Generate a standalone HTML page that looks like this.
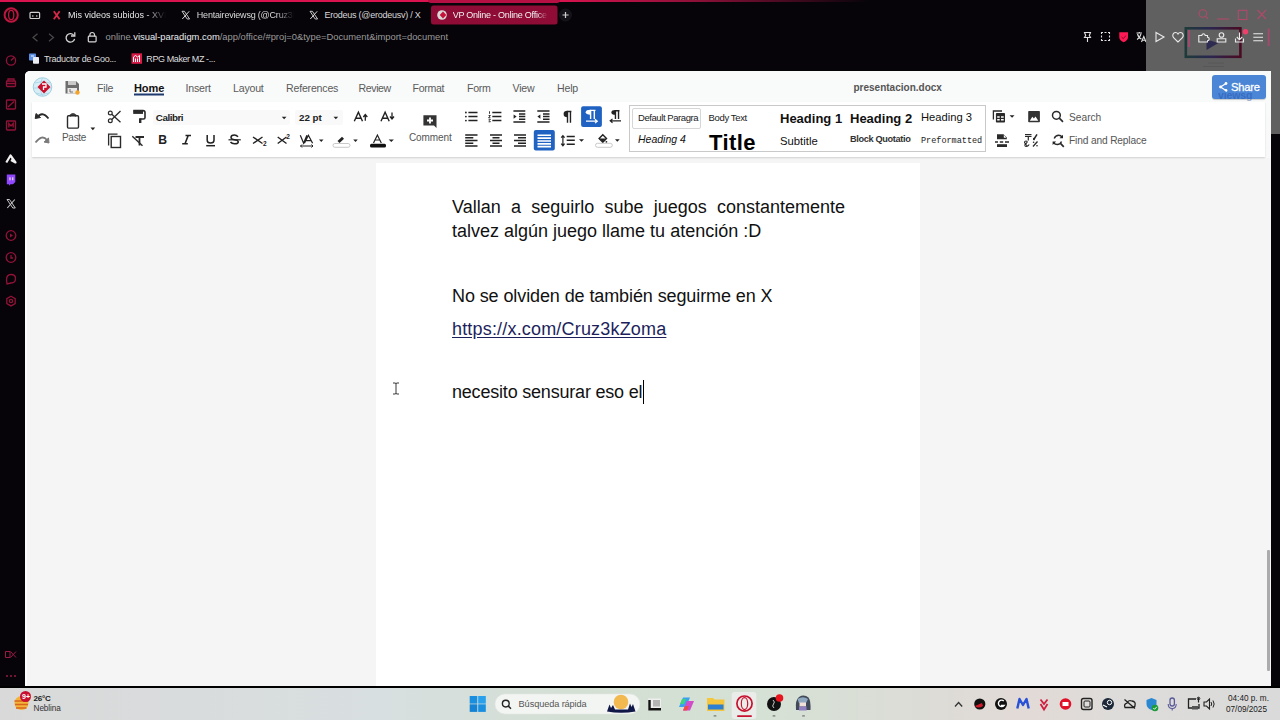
<!DOCTYPE html>
<html><head><meta charset="utf-8">
<style>
*{margin:0;padding:0;box-sizing:border-box}
html,body{width:1280px;height:720px;overflow:hidden;background:#060409;font-family:"Liberation Sans",sans-serif}
.a{position:absolute}
.t{position:absolute;white-space:nowrap;line-height:1}
svg{position:absolute;overflow:visible}
</style></head><body>
<!-- top accent line -->
<div class="a" style="left:0;top:0;width:1280px;height:1.5px;background:linear-gradient(90deg,#d8134f 0,#d8134f 560px,#8a1038 700px,#060409 870px)"></div>
<div class="a" style="left:428px;top:0;width:132px;height:3px;background:#b50f43;border-radius:0 0 3px 3px"></div>

<!-- ===== browser chrome ===== -->
<svg width="1280" height="720" style="left:0;top:0" viewBox="0 0 1280 720" fill="none">
  <!-- opera logo -->
  <ellipse cx="11.2" cy="15" rx="6.6" ry="6.8" stroke="#c0163f" stroke-width="2"/>
  <ellipse cx="11.2" cy="15" rx="2.6" ry="4.6" stroke="#c0163f" stroke-width="1.3"/>
  <!-- vr icon -->
  <rect x="30" y="12.3" width="9.6" height="6.2" rx="1" stroke="#cfcfcf" stroke-width="1.2"/>
  <circle cx="32.8" cy="16" r="0.8" fill="#cfcfcf"/><circle cx="36.8" cy="16" r="0.8" fill="#cfcfcf"/>
  <!-- red X tab1 -->
  <path d="M53.8 11.3 L59.6 19.3 M59.6 11.3 L53.8 19.3" stroke="#d6294a" stroke-width="1.8"/>
  <!-- X tab2 / tab3 -->
  <path d="M182 11.3 H184.4 L189.6 19 H187.2 Z" stroke="#d8d8d8" stroke-width="0.9"/>
  <path d="M189.2 11.3 L182.3 19" stroke="#d8d8d8" stroke-width="1"/>
  <path d="M310 11.3 H312.4 L317.6 19 H315.2 Z" stroke="#d8d8d8" stroke-width="0.9"/>
  <path d="M317.2 11.3 L310.3 19" stroke="#d8d8d8" stroke-width="1"/>
  <!-- active tab -->
  <rect x="431" y="5.6" width="126.5" height="19" rx="2.5" fill="#8e0c36"/>
  <circle cx="442" cy="15" r="4.8" fill="#d9d9d9"/>
  <path d="M443 11.5 L446.3 15 L443 18.5 L439.7 15 Z" fill="#c8143a"/>
  <!-- plus -->
  <circle cx="565.5" cy="15" r="6.5" fill="#15131a"/>
  <path d="M562.5 15 H568.6 M565.5 12 V18" stroke="#cfcfcf" stroke-width="1.2"/>
  <!-- nav -->
  <path d="M37.5 33.8 L33 37.5 L37.5 41.2" stroke="#4a4a4a" stroke-width="1.2"/>
  <path d="M49 33.8 L53.5 37.5 L49 41.2" stroke="#4a4a4a" stroke-width="1.2"/>
  <path d="M74 35.5 A4.3 4.3 0 1 0 74.6 38.8" stroke="#d6d6d6" stroke-width="1.3"/>
  <path d="M74.8 32.2 V36 H71" stroke="#d6d6d6" stroke-width="1.3"/>
  <rect x="88.3" y="36.2" width="7.8" height="5.6" rx="0.8" stroke="#d6d6d6" stroke-width="1.2"/>
  <path d="M89.9 36.2 V34.8 A2.3 2.3 0 0 1 94.5 34.8 V36.2" stroke="#d6d6d6" stroke-width="1.2"/>
  <!-- bookmarks -->
  <rect x="29" y="53.5" width="7" height="7" rx="0.8" fill="#5b8fe6"/>
  <rect x="33" y="57" width="6" height="6.8" rx="0.8" fill="#e9ecf3"/>
  <path d="M31 56 H34" stroke="#fff" stroke-width="0.9"/>
  <rect x="131.5" y="53.3" width="10.5" height="10.5" fill="#d81b47"/>
  <path d="M133.5 62 V57 L135.5 55.5 L137.5 57 L139.5 55.5 V62 M135.5 58.5 V62 M137.5 58.5 V62" stroke="#fff" stroke-width="1"/>
  <!-- sidebar icons -->
  <g stroke="#921238" stroke-width="1.3">
    <circle cx="11" cy="60.5" r="4.6"/>
    <path d="M11 60.5 L14 57.5"/>
    <rect x="6.5" y="81" width="9" height="5.5" rx="0.8"/><path d="M8 81 V79 H14 V81 M6.5 83.5 H15.5"/>
    <rect x="6.5" y="100" width="9" height="9" rx="0.8"/><path d="M8 107 L14 101.5"/>
    <rect x="6.5" y="121" width="9" height="9" rx="0.8"/><path d="M8.8 127.5 V123.5 L11 126 L13.2 123.5 V127.5"/>
    <circle cx="11" cy="235.5" r="4.8"/>
    <circle cx="11" cy="257.5" r="4.8"/><path d="M11 255 V258 H13"/>
    <path d="M6.5 280 Q6.5 274.5 11 274.5 Q15.5 274.5 15.5 278.5 Q15.5 283 11 283 L7 284 Z"/>
    <path d="M11 296.3 L15.2 298.7 V303.5 L11 305.9 L6.8 303.5 V298.7 Z"/><circle cx="11" cy="301" r="1.6"/>
  </g>
  <path d="M10 233.5 L13 235.5 L10 237.5 Z" fill="#921238"/>
  <path d="M6.3 162.5 L10.5 155.5 L15.5 162.5 L11 160" stroke="#f0f0f0" stroke-width="2.2" stroke-linejoin="round"/>
  <path d="M6.8 174.5 H15.3 V182 L13 184.3 H10.5 L9 185.8 V184.3 H6.8 Z" fill="#9146ff"/>
  <path d="M10 177.3 V180.3 M12.8 177.3 V180.3" stroke="#fff" stroke-width="1"/>
  <path d="M7 199.5 H9.5 L15.3 208 H12.8 Z" stroke="#c8c8c8" stroke-width="1"/>
  <path d="M14.8 199.5 L7.3 208" stroke="#c8c8c8" stroke-width="1.1"/>
  <path d="M5.5 651.5 H10 V657.5 H5.5 Z M10.5 651.5 L16 657.5 M16 651.5 L10.5 657.5" stroke="#9a1a45" stroke-width="1"/>
  <g fill="#9a1a45"><circle cx="7" cy="676" r="1"/><circle cx="11" cy="676" r="1"/><circle cx="15" cy="676" r="1"/></g>
  <!-- right toolbar icons -->
  <g stroke="#e0e0e0" stroke-width="1.1">
    <path d="M1084.5 32.5 H1090.5 L1089.3 35.5 L1090.5 37.5 H1084.5 L1085.7 35.5 Z M1087.5 37.5 V42"/>
    <path d="M1101.5 34 V32.5 H1103 M1108 32.5 H1109.5 V34 M1109.5 39 V40.5 H1108 M1103 40.5 H1101.5 V39 M1101.5 35.5 V37.5 M1109.5 35.5 V37.5 M1104.5 32.5 H1106.5 M1104.5 40.5 H1106.5"/>
    <path d="M1136.5 33 H1142 M1139.3 32 V33.5 M1137.5 34 Q1138.5 38 1141.5 39 M1141 34 Q1140 38 1137 39.5 M1141.5 42 L1143.8 36.5 L1146 42 M1142.4 40.3 H1145.2"/>
  </g>
  <path d="M1119.3 32.3 H1128 V37 Q1128 40.5 1123.65 42.2 Q1119.3 40.5 1119.3 37 Z" fill="#ff1a55"/>
  <path d="M1121.5 37 L1123.3 38.6 L1126 35.5" stroke="#8a0a2a" stroke-width="1"/>
</svg>
<div class="t" style="left:68px;top:11px;font-size:9px;color:#e6e6e6;width:98px;overflow:hidden;-webkit-mask-image:linear-gradient(90deg,#000 80%,transparent)">Mis videos subidos - XVII</div>
<div class="t" style="left:196.8px;top:11px;font-size:9px;color:#d8d8d8;letter-spacing:-0.2px;width:97px;overflow:hidden;-webkit-mask-image:linear-gradient(90deg,#000 82%,transparent)">Hentaireviewsg (@Cruz3kZoma)</div>
<div class="t" style="left:324.6px;top:11px;font-size:9px;color:#d8d8d8;letter-spacing:-0.25px">Erodeus (@erodeusv) / X</div>
<div class="t" style="left:452.7px;top:11px;font-size:9px;color:#f2f2f2;letter-spacing:-0.25px;width:95px;overflow:hidden;-webkit-mask-image:linear-gradient(90deg,#000 88%,transparent)">VP Online - Online Office</div>
<div class="t" style="left:105.6px;top:32px;font-size:9.4px;color:#9a9a9a"><span>online.</span><span style="color:#ececec">visual-paradigm.com</span><span>/app/office/#proj=0&amp;type=Document&amp;import=document</span></div>
<div class="t" style="left:44px;top:54.8px;font-size:9px;color:#dedede;letter-spacing:-0.3px">Traductor de Goo...</div>
<div class="t" style="left:146.3px;top:54.8px;font-size:9px;color:#dedede;letter-spacing:-0.4px">RPG Maker MZ -...</div>

<!-- gray overlay (recording widget) -->
<div class="a" style="left:1146px;top:0;width:134px;height:134px;background:#606060"></div>
<svg width="1280" height="720" style="left:0;top:0" viewBox="0 0 1280 720" fill="none">
  <g stroke="#b04a68" stroke-width="1.1">
    <circle cx="1202.8" cy="13.5" r="3.8"/><path d="M1205.5 16.2 L1208 18.8"/>
    <path d="M1217 19 H1229"/>
    <rect x="1238.3" y="10.3" width="8.6" height="9.2"/>
    <path d="M1257.5 10 L1266 19 M1266 10 L1257.5 19"/>
  </g>
  <rect x="1185.8" y="28.3" width="54.6" height="28.5" stroke="url(#fg)" stroke-width="2.6"/>
  <defs><linearGradient id="fg" x1="0" x2="1" y1="0" y2="0"><stop offset="0" stop-color="#1e3b3a"/><stop offset="0.45" stop-color="#2a2650"/><stop offset="1" stop-color="#4a0b22"/></linearGradient></defs>
  <path d="M1189 30 V47" stroke="#a24a6c" stroke-width="2"/>
  <path d="M1268.7 28.5 V46" stroke="#a24a6c" stroke-width="2"/>
  <path d="M1206.5 39.5 L1218.5 43 L1206.5 50 Z" fill="#2e2b50"/>
  <g stroke="#eaeaea" stroke-width="1.1">
    <path d="M1156 32.5 L1164 37 L1156 41.5 Z"/>
    <path d="M1178 42 L1173.8 37.8 Q1172.5 36.5 1172.8 35 Q1173.3 32.5 1175.6 32.5 Q1177.2 32.5 1178 34 Q1178.8 32.5 1180.4 32.5 Q1182.7 32.5 1183.2 35 Q1183.5 36.5 1182.2 37.8 Z"/>
    <path d="M1198.8 42 V35.5 H1201.8 A1.7 1.7 0 1 1 1205.2 35.5 H1207.5 V37.3 A1.7 1.7 0 1 1 1207.5 40.7 V42 Z"/>
    <circle cx="1221.5" cy="35" r="2.3"/><path d="M1217.2 42 V38.8 H1225.8 V42 Z"/>
    <path d="M1239.5 32.5 V39.5 M1236.8 37 L1239.5 39.8 L1242.2 37 M1235.5 38.5 V42 H1243.5 V38.5"/>
    <path d="M1253.3 33.7 H1263 M1253.3 37.3 H1263 M1253.3 40.7 H1263"/>
  </g>
  <circle cx="1245.5" cy="31.8" r="2.7" fill="#f0406a"/>
  <path d="M1208 63 H1224 M1203 66.5 H1224" stroke="#555" stroke-width="0.8"/>
</svg>

<!-- webpage -->
<div class="a" id="page" style="left:25px;top:71px;width:1246px;height:615px;background:#f5f5f5;border-radius:5px 0 0 0;overflow:hidden">
  <!-- menu bar -->
  <div class="a" style="left:0;top:0;width:1246px;height:31px;background:#f9fafa"></div>
  <!-- toolbar panel -->
  <div class="a" style="left:0;top:31px;width:1246px;height:56px;background:linear-gradient(180deg,#f9fafa,#f8f8f8)"></div>
  <div class="a" style="left:0;top:0;width:2px;height:615px;background:#fdfdfd"></div>
  <div class="a" style="left:7px;top:31px;width:1233px;height:55px;background:#fff;box-shadow:0 1px 1.5px rgba(0,0,0,.16)"></div>
  <!-- doc page -->
  <div class="a" style="left:351px;top:92px;width:544px;height:530px;background:#fff"></div>
  <!-- doc text -->
  <div class="t" style="left:427px;top:127px;width:393px;font-size:18px;color:#111;text-align:justify;text-align-last:justify">Vallan a seguirlo sube juegos constantemente</div>
  <div class="t" style="left:427px;top:151px;font-size:18px;color:#111">talvez algún juego llame tu atención :D</div>
  <div class="t" style="left:427px;top:216px;font-size:18px;color:#111;letter-spacing:-0.1px">No se olviden de también seguirme en X</div>
  <div class="t" style="left:427px;top:248.5px;font-size:18px;color:#1d1f5c;letter-spacing:0.18px;text-decoration:underline;text-underline-offset:2px">https://x.com/Cruz3kZoma</div>
  <div class="t" style="left:427px;top:311.5px;font-size:18px;color:#111;letter-spacing:-0.2px">necesito sensurar eso el</div>
  <div class="a" style="left:617.5px;top:309px;width:1.2px;height:24px;background:#000"></div>
</div>

<!-- ===== menu bar ===== -->
<svg width="1280" height="720" style="left:0;top:0" viewBox="0 0 1280 720">
  <!-- logo -->
  <circle cx="42.5" cy="87" r="9.3" fill="#d8eef6" stroke="#8fc6dc" stroke-width="0.8"/>
  <path d="M35 83 Q42 80 50 83 M34 88 H51 M36 93 Q42 96 49 93 M42.5 78 Q38 87 42.5 96" stroke="#9ccfe2" stroke-width="0.7" fill="none"/>
  <path d="M44 80.5 L50.5 87 L44 93.5 L37.5 87 Z" fill="#c8102e"/>
  <path d="M42 84 H46 V87 H43.5 V90" stroke="#fff" stroke-width="1.3" fill="none"/>
  <!-- save -->
  <path d="M65.5 81 H76 L79 84 V93.5 H65.5 Z" fill="#6d6d6d"/>
  <rect x="68" y="81" width="8" height="4" fill="#c9c9c9"/>
  <rect x="67.5" y="88" width="9.5" height="5.5" fill="#e8e8e8"/>
  <path d="M70 89 V92 H73" stroke="#555" stroke-width="0.8" fill="none"/>
  <circle cx="77.5" cy="92.5" r="2.2" fill="#f4a42b"/>
  <!-- Home underline -->
  <rect x="134" y="93.5" width="30" height="2" fill="#1f3a6e"/>
</svg>
<div class="t" style="left:97px;top:83px;font-size:10.6px;color:#5a5a5a;letter-spacing:-0.2px">File</div>
<div class="t" style="left:134px;top:83px;font-size:11px;font-weight:bold;color:#111;letter-spacing:-0.1px">Home</div>
<div class="t" style="left:185.5px;top:83px;font-size:10.6px;color:#5a5a5a;letter-spacing:-0.2px">Insert</div>
<div class="t" style="left:233px;top:83px;font-size:10.6px;color:#5a5a5a;letter-spacing:-0.2px">Layout</div>
<div class="t" style="left:286px;top:83px;font-size:10.6px;color:#5a5a5a;letter-spacing:-0.2px">References</div>
<div class="t" style="left:358.5px;top:83px;font-size:10.6px;color:#5a5a5a;letter-spacing:-0.4px">Review</div>
<div class="t" style="left:412.5px;top:83px;font-size:10.6px;color:#5a5a5a;letter-spacing:-0.3px">Format</div>
<div class="t" style="left:467px;top:83px;font-size:10.6px;color:#5a5a5a;letter-spacing:-0.3px">Form</div>
<div class="t" style="left:512.5px;top:83px;font-size:10.6px;color:#5a5a5a;letter-spacing:-0.2px">View</div>
<div class="t" style="left:557px;top:83px;font-size:10.6px;color:#5a5a5a;letter-spacing:-0.2px">Help</div>
<div class="t" style="left:853.5px;top:82.5px;font-size:10px;font-weight:bold;color:#555">presentacion.docx</div>
<!-- share -->
<div class="a" style="left:1212px;top:75px;width:54px;height:24px;background:#4a85d6;border-radius:3px;box-shadow:0 1px 1px rgba(0,0,0,.2)"></div>
<svg width="1280" height="720" style="left:0;top:0" viewBox="0 0 1280 720">
  <path d="M1226 83.5 L1220.5 87 L1226 90.5" stroke="#fff" stroke-width="1.3" fill="none"/>
  <circle cx="1226" cy="83.5" r="1.4" fill="#fff"/><circle cx="1220.5" cy="87" r="1.4" fill="#fff"/><circle cx="1226" cy="90.5" r="1.4" fill="#fff"/>
</svg>
<div class="t" style="left:1231px;top:81.5px;font-size:11.2px;color:#fff;letter-spacing:-0.2px;-webkit-text-stroke:0.3px #fff">Share</div>

<div class="t" style="left:1218px;top:90px;font-size:10.5px;font-weight:bold;color:rgba(30,70,160,.4);letter-spacing:-0.1px">viewsg</div>
<div class="t" style="left:1170px;top:90px;font-size:10.5px;font-weight:bold;color:rgba(0,0,0,.025);letter-spacing:-0.1px">Hentaire</div>
<!-- ===== toolbar ===== -->
<div class="a" style="left:153px;top:110px;width:137px;height:15px;background:#f9f9f9;border-radius:2px"></div>
<div class="a" style="left:295px;top:110px;width:48px;height:15px;background:#f9f9f9;border-radius:2px"></div>
<div class="t" style="left:155.8px;top:113px;font-size:9.8px;font-weight:bold;color:#222;letter-spacing:-0.45px">Calibri</div>
<div class="t" style="left:299px;top:113px;font-size:9.8px;font-weight:bold;color:#222">22 pt</div>
<div class="t" style="left:62px;top:132.5px;font-size:10px;color:#555;letter-spacing:-0.3px">Paste</div>
<div class="t" style="left:409px;top:132.5px;font-size:10px;color:#555;letter-spacing:-0.1px">Comment</div>
<div class="t" style="left:1069px;top:112.8px;font-size:10.2px;color:#555">Search</div>
<div class="t" style="left:1069px;top:136.3px;font-size:10.2px;color:#555;letter-spacing:-0.15px">Find and Replace</div>
<svg width="1280" height="720" style="left:0;top:0" viewBox="0 0 1280 720" fill="none" stroke="#2a2a2a">
  <!-- undo / redo -->
  <path d="M37 117.5 Q42 110.5 48.5 118.5" stroke-width="1.8"/>
  <path d="M35.2 118.5 L36 113.5 L40.5 117.5 Z" fill="#2a2a2a" stroke-width="1"/>
  <path d="M47 140 Q42 134 35.5 142.5" stroke="#7a7a7a" stroke-width="1.8"/>
  <path d="M49 143 L48.5 138 L44 142 Z" fill="#7a7a7a" stroke="#7a7a7a" stroke-width="1"/>
  <!-- clipboard -->
  <rect x="67.5" y="115.8" width="11" height="12.3" rx="1" stroke-width="1.4"/>
  <path d="M70.5 116.5 V115 H72 V114 H74 V115 H75.5 V116.5" stroke-width="1.3"/>
  <path d="M90.5 127.5 H95.2 L92.85 130.2 Z" fill="#222" stroke="none"/>
  <!-- scissors -->
  <circle cx="110.3" cy="113" r="1.9" stroke-width="1.2"/>
  <circle cx="110.3" cy="120.8" r="1.9" stroke-width="1.2"/>
  <path d="M111.8 114.3 L120.5 122.3 M111.8 119.5 L120.5 111" stroke-width="1.3"/>
  <!-- copy -->
  <path d="M108.6 145.5 V134.2 H117.5" stroke-width="1.3"/>
  <rect x="111.2" y="136.5" width="9.3" height="11" stroke-width="1.4"/>
  <!-- format painter -->
  <path d="M133.3 110.6 H143 Q145 110.6 145 112.5 V117.5 Q145 119 143.5 119 H140.2 V122.8" stroke-width="1.6"/>
  <rect x="133.2" y="110.5" width="9.8" height="3.4" fill="#2a2a2a" stroke="none"/>
  <rect x="139" y="118.5" width="2.4" height="4.5" fill="#2a2a2a" stroke="none"/>
  <!-- clear formatting -->
  <path d="M135.5 137 H144" stroke-width="2"/>
  <path d="M139.5 137 V145.5" stroke-width="1.8"/>
  <path d="M132.3 136.3 L142.5 145.8" stroke-width="1.4"/>
  <!-- dropdown arrows font -->
  <path d="M281.8 116.8 H286.5 L284.15 119.3 Z" fill="#222" stroke="none"/>
  <path d="M333.5 116.8 H338.2 L335.85 119.3 Z" fill="#222" stroke="none"/>
</svg>
<!-- B I U S x2 x2 -->
<div class="t" style="left:158.3px;top:133.5px;font-size:12.2px;font-weight:bold;color:#222">B</div>
<svg width="1280" height="720" style="left:0;top:0" viewBox="0 0 1280 720" fill="none" stroke="#222">
  <path d="M185.5 135.5 H191 M182.2 143.8 H187.8 M188.2 135.5 L185 143.8" stroke-width="1.6"/>
  <path d="M207.2 135 V140.2 Q207.2 143 210.6 143 Q214 143 214 140.2 V135" stroke-width="1.5"/>
  <path d="M206.2 145.7 H215" stroke-width="1.5"/>
  <path d="M228.5 139.8 H240.8" stroke-width="1.2"/>
  <path d="M253 137 L262.5 143.5 M262.5 137 L253 143.5" stroke-width="1.4"/>
  <path d="M277.7 137 L286.5 143.5 M286.5 137 L277.7 143.5" stroke-width="1.4"/>
  <!-- VA -->
  <path d="M300.3 135.3 L303.6 143.2 L306.9 135.3 M304.4 143.2 L308.4 135.3 L312.6 143.2 M306 140.5 H311" stroke-width="1.25"/>
  <path d="M300.5 146 H313 M302 144.5 L300.5 146 L302 147.5 M311.5 144.5 L313 146 L311.5 147.5" stroke-width="1"/>
  <path d="M319 139.5 H323.5 L321.25 142 Z" fill="#222" stroke="none"/>
  <!-- highlighter -->
  <path d="M337.5 141 L342 136.8 L344 138.8 L339.5 143 Z" fill="#222" stroke="none"/>
  <rect x="333" y="143.5" width="17" height="3.8" rx="1.9" stroke="#bbb" stroke-width="0.8" fill="#fff"/>
  <path d="M353.2 139.5 H357.8 L355.5 142 Z" fill="#222" stroke="none"/>
  <!-- font color -->
  <path d="M373.5 143 L377.4 135 L381.3 143 M375 140 H379.8" stroke-width="1.2"/>
  <rect x="370" y="143.8" width="16" height="3.8" rx="1.5" fill="#111" stroke="none"/>
  <path d="M388.7 139.5 H393.9 L391.3 142 Z" fill="#222" stroke="none"/>
  <!-- A up / A down -->
  <path d="M354.3 121.3 L358.4 112.3 L362.5 121.3 M355.8 118.3 H361" stroke-width="1.4"/>
  <path d="M365.3 120.8 V114.8 M363.3 117 L365.3 114.6 L367.3 117" stroke-width="1.3"/>
  <path d="M381 121.3 L385.1 112.3 L389.2 121.3 M382.5 118.3 H387.7" stroke-width="1.4"/>
  <path d="M392 112.5 V118.8 M390 116.5 L392 119 L394 116.5" stroke-width="1.3"/>
  <!-- comment -->
  <path d="M423.4 115.2 H436.5 V128 L434 125.6 H423.4 Z" fill="#333" stroke="none"/>
  <path d="M430 117.5 V123.5 M427 120.5 H433" stroke="#fff" stroke-width="1.8"/>
</svg>
<div class="t" style="left:263px;top:140.5px;font-size:6.5px;font-weight:bold;color:#222">2</div>
<div class="t" style="left:286.3px;top:133.8px;font-size:6.5px;font-weight:bold;color:#222">2</div>
<svg width="1280" height="720" style="left:0;top:0" viewBox="0 0 1280 720" fill="none" stroke="#222">
  <!-- S strike -->
  <path d="M238 136.8 Q236.5 135 234.4 135 Q231 135 231 137.3 Q231 139.4 234.5 139.8 Q238.3 140.3 238.3 142 Q238.3 143.8 234.5 143.8 Q231.8 143.8 230.5 142" stroke-width="1.5"/>
  <!-- bullets -->
  <g stroke-width="1.5">
    <path d="M468.4 112.5 H477.5 M468.4 116.6 H477.5 M468.4 120.6 H477.5"/>
    <path d="M492.3 112.5 H501.4 M492.3 116.6 H501.4 M492.3 120.6 H501.4"/>
    <path d="M513.4 111.1 H525.3 M519 114 H525.3 M519 116.6 H525.3 M519 119.3 H525.3 M513.4 122 H525.3"/>
    <path d="M537.3 111.1 H549.5 M543 114 H549.5 M543 116.6 H549.5 M543 119.3 H549.5 M537.3 122 H549.5"/>
    <path d="M465.2 135 H477.5 M465.2 137.8 H473.3 M465.2 140.5 H477.5 M465.2 143.3 H473.3 M465.2 146 H477.5"/>
    <path d="M490 135 H502 M492.5 137.8 H499.5 M490 140.5 H502 M492.5 143.3 H499.5 M490 146 H502"/>
    <path d="M514 135 H526 M518 137.8 H526 M514 140.5 H526 M518 143.3 H526 M514 146 H526"/>
  </g>
  <g fill="#222" stroke="none">
    <circle cx="465.9" cy="112.5" r="0.9"/><circle cx="465.9" cy="116.6" r="0.9"/><circle cx="465.9" cy="120.6" r="0.9"/>
    <path d="M513.6 114.5 L516.6 116.6 L513.6 118.7 Z"/>
    <path d="M540.4 114.5 L537.4 116.6 L540.4 118.7 Z"/>
  </g>
  <g stroke-width="0.9">
    <path d="M489.5 111.3 V113.8 M488.6 115.5 H490.4 L488.6 117.7 H490.4 M488.6 119.3 H490.4 L489.3 120.5 L490.4 121.8 H488.6"/>
  </g>
  <!-- pilcrow -->
  <path d="M567.50 110.80 H567.50 A3.90 3.21 0 0 0 567.50 117.23 H567.50 Z" fill="#222" stroke="none"/><path d="M567.50 110.80 V122.70 M570.46 110.80 V122.70 M567.50 111.50 H571.40" stroke="#222" stroke-width="1.4"/>
  <!-- LTR btn -->
  <rect x="581.1" y="106.2" width="20.8" height="20.8" rx="2" fill="#1f62c2" stroke="none"/>
  <path d="M590.60 109.70 H590.60 A4.90 2.48 0 0 0 590.60 114.67 H590.60 Z" fill="#fff" stroke="none"/><path d="M590.60 109.70 V118.90 M594.32 109.70 V118.90 M590.60 110.40 H595.50" stroke="#fff" stroke-width="1.4"/>
  <path d="M586 121.2 H597 M595 119.3 L597.3 121.2 L595 123.1" stroke="#fff" stroke-width="1.2"/>
  <!-- RTL -->
  <path d="M615.45 110.00 H615.45 A4.05 2.40 0 0 0 615.45 114.81 H615.45 Z" fill="#222" stroke="none"/><path d="M615.45 110.00 V118.90 M618.53 110.00 V118.90 M615.45 110.70 H619.50" stroke="#222" stroke-width="1.4"/>
  <path d="M621 120.8 H610.5 M612.5 118.9 L610.2 120.8 L612.5 122.7" stroke-width="1.2"/>
  <!-- justify btn -->
  <rect x="533.8" y="130.1" width="21" height="20.4" rx="2" fill="#1f62c2" stroke="none"/>
  <path d="M537.5 135.2 H551 M537.5 138.1 H551 M537.5 141 H551 M537.5 143.9 H551 M537.5 146.6 H551" stroke="#fff" stroke-width="1.6"/>
  <!-- line spacing -->
  <path d="M562.9 136 V145.3 M561.2 137.6 L562.9 135.6 L564.6 137.6 M561.2 143.7 L562.9 145.7 L564.6 143.7" stroke-width="1.2"/>
  <path d="M566.7 136.5 H574.8 M566.7 140.3 H574.8 M566.7 144.3 H574.8" stroke-width="1.4"/>
  <path d="M579 139.3 H584 L581.5 141.8 Z" fill="#222" stroke="none"/>
  <!-- shading -->
  <path d="M602.8 134.8 L606.5 138.5 L602.8 142.2 L599.1 138.5 Z" stroke-width="1.4"/>
  <path d="M599.6 138.5 H606 L602.8 141.7 Z" fill="#222" stroke="none"/>
  <circle cx="606.4" cy="141.8" r="0.9" fill="#222" stroke="none"/>
  <rect x="595.5" y="143.3" width="16.8" height="4" rx="2" stroke="#bbb" stroke-width="0.8" fill="#fff"/>
  <path d="M615 139.3 H619.7 L617.35 141.8 Z" fill="#222" stroke="none"/>
</svg>
<!-- ===== style gallery ===== -->
<div class="a" style="left:629px;top:105px;width:357px;height:46.5px;border:1px solid #c9c9c9;background:#fff"></div>
<div class="a" style="left:632px;top:107.5px;width:69px;height:21px;border:1px solid #d6d6d6;border-radius:2px"></div>
<div class="a" style="left:630px;top:106px;width:355px;height:45px;overflow:hidden">
<div class="t" style="left:8px;top:7px;font-size:9.5px;color:#222;letter-spacing:-0.43px">Default Paragra</div>
<div class="t" style="left:78.6px;top:7px;font-size:9.5px;color:#222;letter-spacing:-0.37px">Body Text</div>
<div class="t" style="left:150px;top:6px;font-size:13px;font-weight:bold;color:#111">Heading 1</div>
<div class="t" style="left:220px;top:6px;font-size:13px;font-weight:bold;color:#111">Heading 2</div>
<div class="t" style="left:291px;top:6.4px;font-size:11.2px;color:#111">Heading 3</div>
<div class="t" style="left:8px;top:28px;font-size:10.5px;font-style:italic;color:#111">Heading 4</div>
<div class="t" style="left:79px;top:25.6px;font-size:22px;font-weight:bold;color:#000;letter-spacing:0.4px">Title</div>
<div class="t" style="left:150px;top:29.5px;font-size:11.3px;color:#111">Subtitle</div>
<div class="a" style="left:220px;top:20px;width:61px;height:25px;overflow:hidden"><div class="t" style="left:0;top:8.75px;font-size:9.2px;font-weight:bold;color:#333;letter-spacing:-0.35px">Block Quotation</div></div>
<div class="a" style="left:291px;top:20px;width:61px;height:25px;overflow:hidden"><div class="t" style="left:0;top:10.6px;font-size:8.5px;font-family:'Liberation Mono',monospace;color:#222">Preformatted</div></div>
</div>
<!-- ===== right tools ===== -->
<svg width="1280" height="720" style="left:0;top:0" viewBox="0 0 1280 720" fill="none" stroke="#2a2a2a">
  <path d="M993.4 119.5 V111 H1002" stroke-width="1.3"/>
  <rect x="995.9" y="113.1" width="9.1" height="9.5" rx="0.8" fill="#2a2a2a" stroke="none"/>
  <path d="M997.2 117 H999.7 M1001 117 H1003.7 M997.2 119.8 H999.7 M1001 119.8 H1003.7" stroke="#fff" stroke-width="1.4"/>
  <path d="M1009.6 115.3 H1014.5 L1012.05 117.8 Z" fill="#222" stroke="none"/>
  <rect x="1028.2" y="111" width="11.7" height="11.3" rx="0.8" fill="#333" stroke="none"/>
  <path d="M1029.8 120.8 L1032.3 116.8 L1033.9 118.6 L1035.5 116.6 L1038.3 120.8 Z" fill="#fff" stroke="none"/>
  <circle cx="1056.4" cy="115.3" r="3.9" stroke-width="1.5"/>
  <path d="M1059.3 118.2 L1063 121.8" stroke-width="1.7"/>
  <!-- page break -->
  <path d="M997 134.2 H1003.5 L1006.8 137.5 V139.2 H997 Z" fill="#2a2a2a" stroke="none"/>
  <path d="M1003.8 134.8 L1006.3 137.8 H1003.8 Z" fill="#fff" stroke="none"/>
  <path d="M995 142 H998 M999.8 142 H1003.2 M1005 142 H1009" stroke-width="1.3"/>
  <rect x="997" y="144.2" width="10" height="2.8" fill="#2a2a2a" stroke="none"/>
  <!-- special chars -->
  <path d="M1025 134.5 H1031.5 M1025 136.4 H1031.5 M1028.3 136.4 V140.5" stroke-width="1.2"/>
  <path d="M1033.5 140 L1037 134.3" stroke-width="1.5"/>
  <circle cx="1034" cy="138.8" r="1" fill="#222" stroke="none"/>
  <path d="M1033 146.5 L1037.5 141.5" stroke-width="1.3"/>
  <circle cx="1033.6" cy="142.2" r="0.8" fill="#222" stroke="none"/><circle cx="1037" cy="145.8" r="0.8" fill="#222" stroke="none"/>
  <path d="M1027.5 146.5 L1024.5 142.5 Q1024.5 141 1026 141 Q1027.5 141 1027 142.5 L1025 144.5 Q1024.5 146.5 1026.3 146.5 Q1028 146.5 1029.2 144.5" stroke-width="1.1"/>
  <!-- find replace -->
  <path d="M1054.2 138.5 Q1055.5 135.3 1058.7 135.3 Q1061 135.3 1062.2 137.3" stroke-width="1.4"/>
  <path d="M1063 134.7 V138.3 H1059.5 Z" fill="#222" stroke="none"/>
  <path d="M1061.5 141.5 Q1060.3 144.5 1057.3 144.5 Q1054.9 144.5 1053.7 142.6" stroke-width="1.4"/>
  <path d="M1052.6 145.1 V141.5 H1056.1 Z" fill="#222" stroke="none"/>
  <path d="M1060.2 143.2 L1063.8 146.8" stroke-width="1.7"/>
</svg>

<!-- mouse ibeam -->
<svg width="1280" height="720" style="left:0;top:0" viewBox="0 0 1280 720" fill="none">
  <path d="M393 383 H395 Q396 383 396 384 Q396 383 397 383 H399 M396 384 V393 M393 394 H395 Q396 394 396 393 Q396 394 397 394 H399" stroke="#fff" stroke-width="2.2"/>
  <path d="M393 383 H395 Q396 383 396 384 Q396 383 397 383 H399 M396 384 V393 M393 394 H395 Q396 394 396 393 Q396 394 397 394 H399" stroke="#222" stroke-width="0.9"/>
</svg>
<div class="a" style="left:1267px;top:550px;width:3px;height:121px;background:#ababab;border-radius:1px"></div>
<!-- ===== taskbar ===== -->
<div class="a" style="left:0;top:686px;width:1280px;height:2px;background:#000"></div>
<div class="a" style="left:0;top:688px;width:1280px;height:32px;background:linear-gradient(90deg,#d9d9d9 0,#d9dcdd 15%,#d8dfe0 30%,#d3dfd3 45%,#d6e1d5 60%,#dcdcd6 72%,#e2dad6 80%,#dddcda 88%,#dadada 100%)"></div>
<svg width="1280" height="720" style="left:0;top:0" viewBox="0 0 1280 720" fill="none">
  <!-- weather -->
  <circle cx="21.5" cy="703" r="7" fill="#f2b53a"/>
  <path d="M14.5 701 H28.5 M15 704.5 H28 M16 708 H26.5" stroke="#d9641e" stroke-width="1.6"/>
  <circle cx="25.5" cy="696.5" r="5.5" fill="#c8102e"/>
  <!-- windows -->
  <rect x="469.7" y="696" width="7.6" height="7.6" fill="#1a8fe0"/>
  <rect x="478.2" y="696" width="7.6" height="7.6" fill="#28a0ec"/>
  <rect x="469.7" y="704.3" width="7.6" height="7.6" fill="#1682d4"/>
  <rect x="478.2" y="704.3" width="7.6" height="7.6" fill="#1a8fe0"/>
  <!-- search pill -->
  <rect x="495" y="694" width="145" height="20" rx="10" fill="#f3f5f3" stroke="#e4e8e4" stroke-width="0.6"/>
  <circle cx="505.8" cy="703.6" r="3.4" stroke="#222" stroke-width="1.4"/>
  <path d="M508.3 706.1 L511 708.8" stroke="#222" stroke-width="1.5"/>
  <circle cx="621" cy="702" r="7.3" fill="#f2b950"/>
  <path d="M607 711.5 L609.5 704.5 L611 708 L613 705 L615 709.5 L628 709.5 L630 703.5 L631.5 707 L633 704 L635.5 711.5 Q621 714 607 711.5 Z" fill="#101848"/>
  <!-- task view -->
  <rect x="648" y="698.5" width="13" height="12" fill="#eeeeee"/>
  <path d="M649.5 700 V709.2 H661" stroke="#111" stroke-width="2.4"/>
  <rect x="653" y="700" width="7" height="6.5" fill="#b5b5b5"/>
  <!-- copilot -->
  <path d="M679 707 L683 697.5 H690 L686 707 Z" fill="#3aa0f0"/>
  <path d="M680 704 L682 699 H686 L684 704 Z" fill="#40d080"/>
  <path d="M683 710.5 L687 701 H694 L690 710.5 Z" fill="#d04cc8"/>
  <path d="M683 710.5 L685 706 H689 L687 710.5 Z" fill="#f04848"/>
  <!-- files -->
  <path d="M707 698 H713 L714.5 699.5 H724.4 V711 H707 Z" fill="#f3c63b"/>
  <rect x="708" y="704.5" width="15.5" height="5" fill="#2d7fd0"/>
  <rect x="713.5" y="715.2" width="3" height="1.4" rx="0.7" fill="#777"/>
  <!-- opera active -->
  <rect x="731.7" y="692" width="24.6" height="27" rx="3" fill="#e9ece9"/>
  <ellipse cx="744.5" cy="703.6" rx="7.6" ry="7.6" stroke="#c8102e" stroke-width="1.7"/>
  <ellipse cx="744.5" cy="703.6" rx="3.2" ry="6" stroke="#c8102e" stroke-width="1.2"/>
  <rect x="737" y="715.2" width="15" height="1.8" rx="0.9" fill="#c8102e"/>
  <!-- black circle app -->
  <circle cx="774" cy="704" r="7" fill="#111"/>
  <path d="M773 700 Q775.5 702 773.5 704 Q771.5 706 774 708" stroke="#ddd" stroke-width="0.9"/>
  <circle cx="779.5" cy="698" r="3.8" fill="#e8141e"/>
  <rect x="772.5" y="715.2" width="3" height="1.4" rx="0.7" fill="#777"/>
  <!-- avatar -->
  <path d="M796 710 Q795 700 799 697 Q804 694 808.5 697.5 Q811 701 810.5 710 Z" fill="#404a58"/>
  <path d="M797.5 699 Q803 695.5 808 699 L806 703 H799 Z" fill="#8fa8c0"/>
  <rect x="799.5" y="702.5" width="6.5" height="4" fill="#f0e0d8"/>
  <rect x="799" y="706.5" width="7.5" height="4" fill="#9080c0"/>
  <rect x="802" y="715.2" width="3" height="1.4" rx="0.7" fill="#777"/>
  <!-- tray -->
  <path d="M955 706.5 L958.6 702.5 L962.2 706.5" stroke="#333" stroke-width="1.3"/>
  <circle cx="979.8" cy="704" r="5.6" fill="#111"/>
  <path d="M975 706 Q978 709 983 706 L982 703 Z" fill="#d01a2a"/>
  <circle cx="1001" cy="704" r="6" fill="#111"/>
  <path d="M1003.8 701 A3.2 3.2 0 1 0 1004 705.5 H1001" stroke="#fff" stroke-width="1.4"/>
  <path d="M1017.3 708.5 L1019.5 699 L1023 705 L1026.5 699 L1028.7 708.5" stroke="#2850d8" stroke-width="2.4" stroke-linejoin="round"/>
  <path d="M1040.5 699.5 L1044 704 L1047.5 699.5 M1040.5 704 L1044 709.5 L1047.5 704" stroke="#d02040" stroke-width="1.8"/>
  <circle cx="1065.5" cy="704" r="5.8" fill="#e01028"/>
  <path d="M1062.5 702 H1068.5 V706 H1062.5 Z" fill="#fff"/>
  <rect x="1081.5" y="698.5" width="10.5" height="11" rx="2" stroke="#222" stroke-width="1.4"/>
  <rect x="1084" y="701" width="6" height="6" rx="1" stroke="#222" stroke-width="1"/>
  <circle cx="1108" cy="704" r="6" fill="#1b2838"/>
  <circle cx="1109.5" cy="702.5" r="2.2" stroke="#fff" stroke-width="1"/>
  <path d="M1103 705 L1107 707" stroke="#fff" stroke-width="1.2"/>
  <path d="M1125 707.5 Q1123.5 704 1127 703 Q1128.5 699.5 1132 701 Q1136 701.5 1135 705.5 Q1135 707.5 1132 707.5 Z M1124.5 699.5 L1135 708.5" stroke="#222" stroke-width="1.3"/>
  <path d="M1146.5 700 L1151.5 698 L1156.5 700 V704 Q1156.5 708 1151.5 710 Q1146.5 708 1146.5 704 Z" fill="#2a88d0"/>
  <circle cx="1155" cy="708" r="3.3" fill="#1a9a3a"/>
  <path d="M1153.3 708 L1154.6 709.3 L1156.8 706.8" stroke="#fff" stroke-width="0.9"/>
  <rect x="1170" y="698" width="4.4" height="8" rx="2.2" stroke="#5a5a9a" stroke-width="1.3"/>
  <path d="M1168.2 704 Q1168.2 708.5 1172.2 708.5 Q1176.2 708.5 1176.2 704 M1172.2 708.5 V710.5" stroke="#5a5a9a" stroke-width="1.1"/>
  <path d="M1196 699 H1188.5 V708 H1199 V704" stroke="#222" stroke-width="1.3"/>
  <rect x="1192" y="706" width="6" height="3.5" fill="#555"/>
  <path d="M1198.5 697.5 V702.5" stroke="#222" stroke-width="1.2"/><circle cx="1198.5" cy="698.5" r="1.3" stroke="#222" stroke-width="1"/>
  <path d="M1204 702 H1206.5 L1209.5 699 V709 L1206.5 706 H1204 Z" stroke="#222" stroke-width="1.1"/>
  <path d="M1211 702 Q1212.5 704 1211 706 M1213 700.5 Q1215.3 704 1213 707.5" stroke="#222" stroke-width="1"/>
</svg>
<div class="t" style="left:22px;top:692.5px;font-size:7px;font-weight:bold;color:#fff">9+</div>
<div class="t" style="left:33.6px;top:695px;font-size:8px;font-weight:bold;color:#1a1a1a;letter-spacing:-0.2px">26°C</div>
<div class="t" style="left:33.6px;top:705px;font-size:8.2px;color:#333;letter-spacing:-0.1px">Neblina</div>
<div class="t" style="left:518.6px;top:699.5px;font-size:9.2px;color:#555;letter-spacing:-0.1px">Búsqueda rápida</div>
<div class="t" style="left:1228px;top:694.5px;font-size:8.2px;color:#1a1a1a">04:40 p. m.</div>
<div class="t" style="left:1226px;top:705.5px;font-size:8.2px;color:#1a1a1a">07/09/2025</div>

</body></html>
